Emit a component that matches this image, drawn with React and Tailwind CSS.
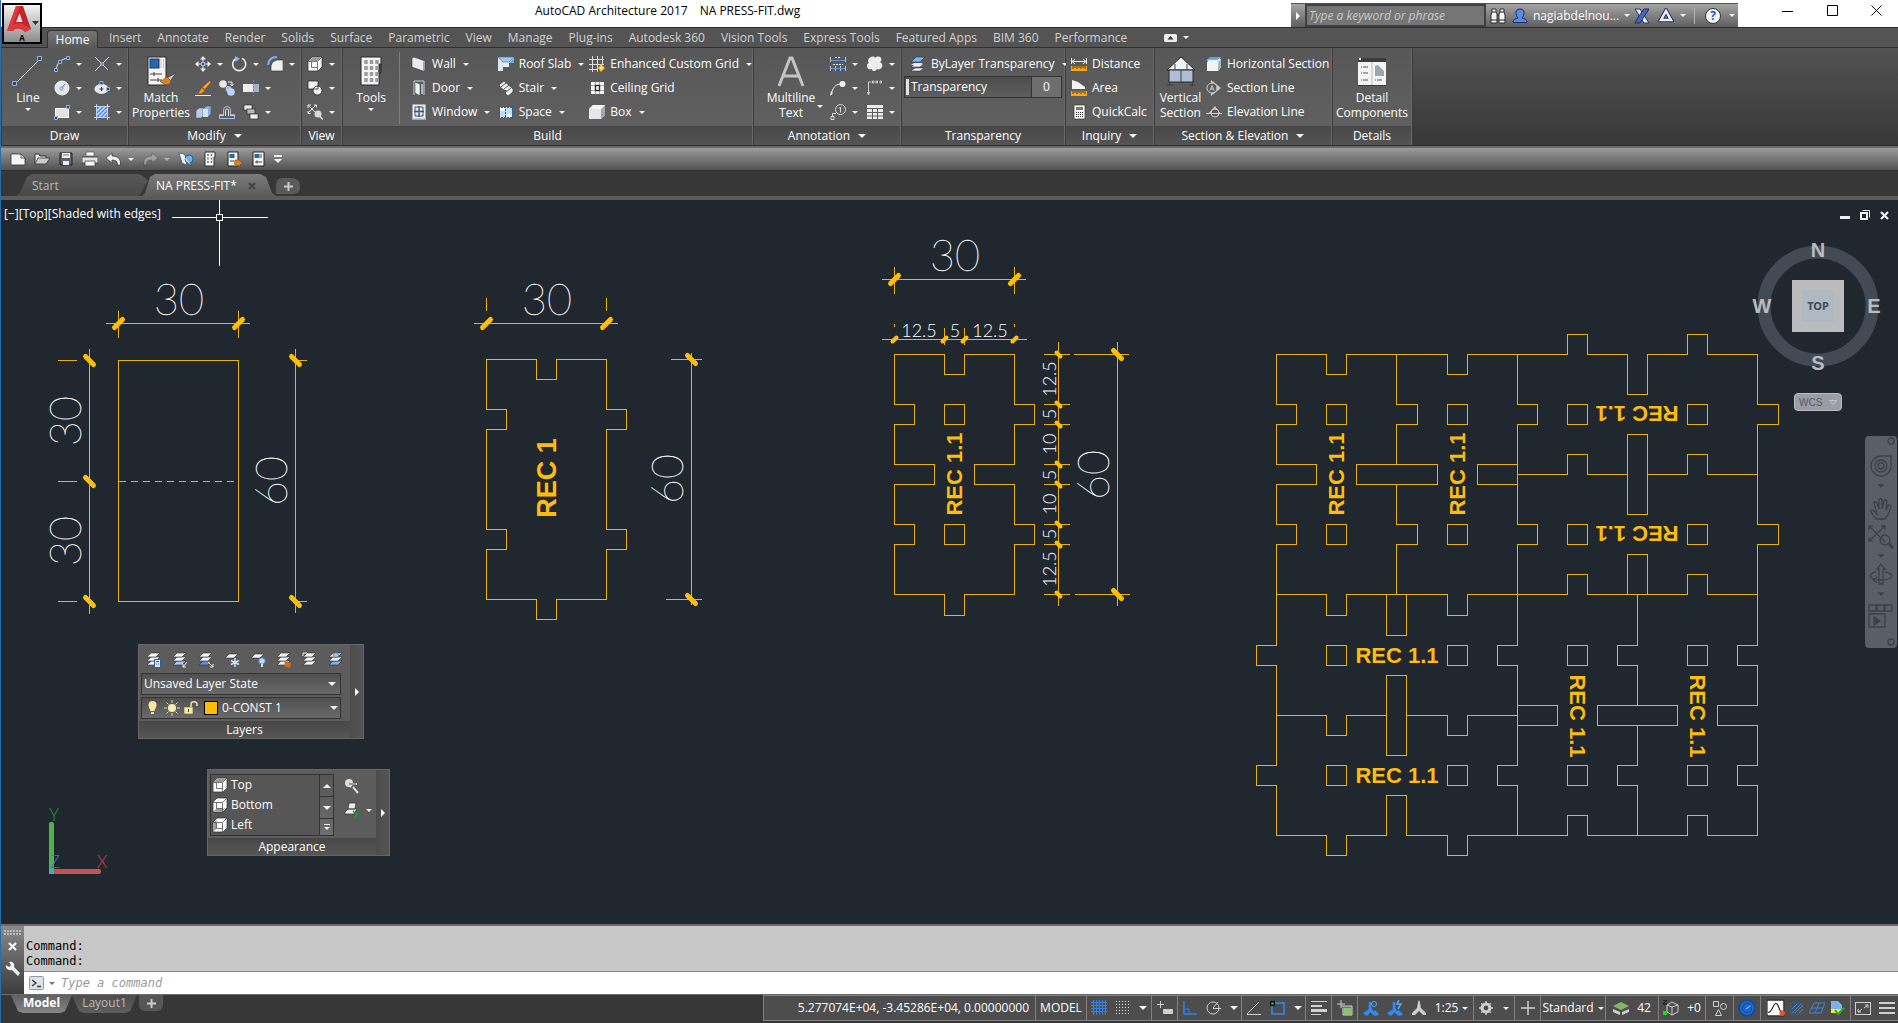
import React from 'react';

const GOLD = '#fdbe0b';

/* ---------- small helpers ---------- */

function Ic({ children, size = 16, label }) {
  return (
    <svg width={size} height={size} viewBox="0 0 16 16" className="shrink-0" fill="none" aria-label={label}>
      {children}
    </svg>
  );
}

function Caret({ big, up }) {
  const w = big ? 8 : 6;
  return (
    <svg width={w} height={w / 2} viewBox="0 0 8 4" className="shrink-0" fill="#f2f2f2">
      <path d={up ? 'M0 4h8L4 0z' : 'M0 0h8L4 4z'} />
    </svg>
  );
}

function RightArrow() {
  return (
    <svg width="4" height="8" viewBox="0 0 4 8" fill="#fff">
      <path d="M0 0v8l4-4z" />
    </svg>
  );
}

/* ---------- ribbon icons ---------- */

const B = '#8db4f0';
const D = '#2b2b2b';

const icons = {
  arc: (
    <Ic label="Arc">
      <path d="M2 14C3 7 7 3 14 2" stroke="#eee" />
      <path d="M.5 12.500h3v3h-3zM4.500 4.500h3v3h-3zM12.500.5h3v3h-3z" stroke={B} fill="#3b4658" />
    </Ic>
  ),
  trimx: (
    <Ic label="Construction line">
      <path d="M1 1l7 7M15 1L1 15M8 8l6 6" stroke="#e6e6e6" />
      <path d="M6.500 6.500h3v3h-3z" fill={B} />
    </Ic>
  ),
  circle: (
    <Ic label="Circle">
      <circle cx="8" cy="8" r="7" fill="#e3e7ea" stroke="#f6f6f6" />
      <path d="M8 8l3-4" stroke="#4a78c0" />
      <circle cx="7.500" cy="8.500" r="1.600" fill="#b8d2f5" stroke="#6f9ad8" />
    </Ic>
  ),
  ellipse: (
    <Ic label="Ellipse">
      <ellipse cx="7.500" cy="9" rx="7" ry="5" fill="#e6eaee" />
      <path d="M7.500 7v4M5.500 9h4" stroke="#333" />
      <path d="M12.500 7.500h3v3h-3zM6 1.500h3v3H6z" stroke={B} fill="#3b4658" />
    </Ic>
  ),
  rect: (
    <Ic label="Rectangle">
      <rect x="1.500" y="4.500" width="13" height="9" fill="#e3e3e3" stroke="#fafafa" />
      <path d="M.5 12.500h3v3h-3zM12.500 1.500h3v3h-3z" stroke={B} fill="#3b4658" />
    </Ic>
  ),
  hatch: (
    <Ic label="Hatch">
      <rect x="3" y="3" width="10" height="10" fill="#4f86d6" />
      <path d="M3 7l4-4M3 11l8-8M5 13l8-8M9 13l4-4" stroke="#dce9fb" strokeWidth="1.200" />
      <path d="M2.500 0v16M13.500 0v16M0 2.500h16M0 13.500h16" stroke="#bcd3f2" />
    </Ic>
  ),
  move: (
    <Ic label="Move">
      <path d="M8 0l3 3.500H5zM8 16l3-3.500H5zM0 8l3.500-3v6zM16 8l-3.500-3v6z" fill="#eee" />
      <path d="M8 3v3M8 10v3M3 8h3M10 8h3" stroke="#eee" />
      <rect x="6.500" y="6.500" width="3" height="3" stroke={B} />
    </Ic>
  ),
  rotate: (
    <Ic label="Rotate">
      <path d="M5 2.500A6.500 6.500 0 1 0 11 2.300" stroke="#ededed" strokeWidth="1.600" />
      <path d="M4 0l5 2.500L4.500 6z" fill={B} />
    </Ic>
  ),
  fillet: (
    <Ic label="Fillet">
      <path d="M4 15V11C4 7 7 4 11 4h5v11z" fill="#f0f0f0" stroke={D} strokeWidth=".6" />
      <path d="M1 9C1.500 4 4 1 10 1" stroke="#7fb0ee" strokeWidth="2" />
    </Ic>
  ),
  erase: (
    <Ic label="Erase">
      <path d="M0 15.500h16" stroke="#eee" />
      <path d="M14.500.5l1.500 2-6 7-3-2z" fill="#f2a33a" stroke="#6b3a10" strokeWidth=".6" />
      <path d="M7 8l2.500 2c-1 3-3.500 4-6.500 3.500z" fill="#ff9c1a" stroke="#c9480e" strokeWidth=".6" />
    </Ic>
  ),
  copy: (
    <Ic label="Copy">
      <circle cx="4" cy="4" r="3.800" fill="#e8e8e8" />
      <circle cx="9.500" cy="9" r="3" fill="#a9c6ee" />
      <circle cx="12" cy="12" r="3.800" fill="#bcd4f5" />
      <path d="M9 2h4v3M11.500 4l1.500 2 1.500-2" stroke="#eee" />
    </Ic>
  ),
  stretch: (
    <Ic label="Stretch">
      <rect x="0" y="4" width="10" height="8" fill="#eee" />
      <rect x="10" y="4" width="6" height="8" fill="#9fb3c9" />
      <path d="M10.500 0v16" stroke="#3d9be9" strokeDasharray="2 1" />
    </Ic>
  ),
  boxes: (
    <Ic label="Mirror">
      <path d="M1 7l3-3h5v7l-3 3H1z" fill="#b5ccea" stroke="#556" strokeWidth=".5" />
      <path d="M8 5l3-3h5v8l-3 3H8z" fill="#8db0dd" stroke="#445" strokeWidth=".5" />
      <path d="M8 5h5v8H8z" fill="#d5e3f5" />
    </Ic>
  ),
  offset: (
    <Ic label="Offset">
      <path d="M.5 14.500v-3h4V6a3.500 3.500 0 0 1 7 0v5.500h4v3z" stroke="#9fc0ee" />
      <path d="M6.500 12V6.500a1.500 1.500 0 0 1 3 0V12" stroke="#e9e9e9" />
      <path d="M0 11h5M11 11h5" stroke="#e9e9e9" />
    </Ic>
  ),
  array: (
    <Ic label="Draw order">
      <rect x="1" y="1" width="8" height="5" fill="#f0f0f0" stroke={D} strokeWidth=".7" />
      <rect x="4" y="5" width="8" height="5" fill="#b9b9b9" stroke={D} strokeWidth=".7" />
      <rect x="7" y="10" width="8" height="5" fill="#f0f0f0" stroke={D} strokeWidth=".7" />
    </Ic>
  ),
  cube: (
    <Ic label="Top view">
      <path d="M1 5l4-4h10v10l-4 4H1z" fill="#fafafa" stroke={D} strokeWidth=".7" />
      <path d="M1.500 5l4-3.500h9l-4 3.500z" fill="#9a9a9a" />
      <path d="M1 5.500h9.500V15M11 5l4-4M4.500 6v5.500h6" stroke="#555" strokeWidth=".8" />
    </Ic>
  ),
  cubeBottom: (
    <Ic label="Bottom view">
      <path d="M1 5l4-4h10v10l-4 4H1z" fill="#fafafa" stroke={D} strokeWidth=".7" />
      <path d="M1.500 14.500l3-3h9l-3 3z" fill="#9a9a9a" />
      <path d="M1 5.500h9.500V15M11 5l4-4M4.500 6v5.500h6" stroke="#555" strokeWidth=".8" />
    </Ic>
  ),
  cubeLeft: (
    <Ic label="Left view">
      <path d="M1 5l4-4h10v10l-4 4H1z" fill="#fafafa" stroke={D} strokeWidth=".7" />
      <path d="M1.500 5.500l3-3v9l-3 3z" fill="#9a9a9a" />
      <path d="M1 5.500h9.500V15M11 5l4-4M4.500 6v5.500h6" stroke="#555" strokeWidth=".8" />
    </Ic>
  ),
  overlap: (
    <Ic label="Visual style">
      <rect x="1" y="1" width="10" height="8" fill="#f2f2f2" stroke={D} strokeWidth=".8" />
      <circle cx="10.500" cy="10.500" r="4.500" fill="#f2f2f2" stroke={D} strokeWidth=".9" />
      <path d="M6 9h5V6" stroke={D} strokeWidth=".8" />
    </Ic>
  ),
  zoomExt: (
    <Ic label="Zoom extents">
      <path d="M1 1l7 7M9 1L1 9M1 4V1h3M7 1h2.500v2.500M1 7v2.500h2.500" stroke="#e8e8e8" />
      <circle cx="11" cy="10" r="3.500" fill="#d9d9d9" />
      <path d="M13 12.500l3 3" stroke="#ddd" strokeWidth="1.500" />
    </Ic>
  ),
  wall: (
    <Ic label="Wall">
      <path d="M1 2l2-1 11 4v9l-2 1L1 11z" fill="#e8ecef" stroke={D} strokeWidth=".5" />
      <path d="M12 6l2-1v9l-2 1z" fill="#9aa3ab" />
    </Ic>
  ),
  door: (
    <Ic label="Door">
      <path d="M3 15V1h10v14" stroke="#c9d2dc" />
      <path d="M4 2l5 2v12l-5-3z" fill="#eef1f4" stroke={D} strokeWidth=".5" />
      <path d="M10 4h2v10h-2z" fill="#aab8c8" />
    </Ic>
  ),
  window: (
    <Ic label="Window">
      <rect x="2" y="1" width="12" height="13" fill="#dfe9f3" stroke="#f5f5f5" />
      <path d="M8 2v11M3 7.500h10" stroke="#46566a" strokeWidth="1.400" />
      <path d="M4 3h8v9H4z" stroke="#46566a" />
      <path d="M1 15h14" stroke="#eee" />
    </Ic>
  ),
  roof: (
    <Ic label="Roof slab">
      <path d="M0 1h16v6h-5v4H0z" fill="#e9eef3" />
      <path d="M0 1h16l-5 5H5z" fill="#9cc7f2" stroke="#3a6ea5" strokeWidth=".6" />
      <path d="M0 2v13h5V7z" fill="#dfe5eb" />
      <path d="M16 2v5h-5z" fill="#6fa5dd" />
    </Ic>
  ),
  stair: (
    <Ic label="Stair">
      <path d="M1 5l5-4 9 8v3l-5 4-3-3 2-2-3-1-3-2z" fill="#eceff2" stroke={D} strokeWidth=".6" />
      <path d="M3 7l5-4M6 9l5-4M8 12l5-4" stroke="#596470" />
    </Ic>
  ),
  space: (
    <Ic label="Space">
      <rect x="2" y="3" width="12" height="11" fill="#bfdcf6" />
      <path d="M2 3h5v4H2zM9 10h5v4H9z" fill="#eef5fc" />
      <path d="M1.500 1v14M14.500 1v14M0 3.500h16M0 13.500h16M7.500 2v12" stroke="#2c5f8e" strokeDasharray="2 1" />
    </Ic>
  ),
  grid: (
    <Ic label="Enhanced custom grid">
      <path d="M3.500 0v16M8.500 0v16M13.500 0v9M0 3.500h15M0 8.500h15M0 13.500h9" stroke="#dedede" />
      <path d="M12 8l4 4-4 4-3-4z" fill="#ffb61e" />
      <path d="M12.500 9l-2 3.500h2L11.500 15l3-3.500h-2z" fill="#fff2b0" />
    </Ic>
  ),
  ceiling: (
    <Ic label="Ceiling grid">
      <rect x="2" y="2" width="13" height="12" fill="#f4f4f4" />
      <path d="M2 5.500h13M2 10.500h13M6.500 2v12M10.500 2v12" stroke="#aaa" />
      <rect x="6.500" y="5.500" width="4" height="5" fill="#fff" stroke={D} strokeWidth="1.400" />
    </Ic>
  ),
  solidBox: (
    <Ic label="Box">
      <path d="M0 5l4-4h12v10l-4 4H0z" fill="#e4e6e8" />
      <path d="M12 5l4-4v10l-4 4z" fill="#a4a8ac" />
      <path d="M0 5l4-4h12l-4 4z" fill="#f7f7f7" />
    </Ic>
  ),
  dim: (
    <Ic label="Dimension">
      <path d="M.5 1v5M15.500 1v5M.5 10v5M15.500 10v5M5.500 10v5M10.500 10v5" stroke="#a9c8f0" />
      <path d="M1 4.500h14M1 12.500h14" stroke="#5c94de" />
      <path d="M5 1.500h6M3 8.500h10" stroke="#e8e8e8" strokeDasharray="2 1" />
    </Ic>
  ),
  leader: (
    <Ic label="Multileader">
      <path d="M1 15C3 7 5 5 10 4" stroke="#e9e9e9" />
      <path d="M0 16l1-5 2 2z" fill="#e9e9e9" />
      <circle cx="12.500" cy="4" r="3" fill="#f2f2f2" />
    </Ic>
  ),
  tag: (
    <Ic label="Keynote">
      <circle cx="10.500" cy="5.500" r="5" stroke="#d9d9d9" />
      <path d="M9 4.500l1.500-1.500v5.500" stroke="#d9d9d9" />
      <path d="M6 9.500H2.500v3M1 12.500h3v3H1z" stroke="#d9d9d9" />
    </Ic>
  ),
  cloud: (
    <Ic label="Revision cloud">
      <path d="M4 1c2-1 4 0 4 1 1-2 5-2 6 0s0 3-1 4c2 1 3 3 2 5s-3 3-5 2c-1 1-1 2-3 2s-2-1-2-2c-2 1-4 0-5-2s1-4 2-4C0 5 1 2 4 1z" fill="#ededed" />
    </Ic>
  ),
  chain: (
    <Ic label="Leader note">
      <path d="M1.500 14V2h3M1.500 15l-1-3M1.500 15l1-3" stroke="#cfcfcf" />
      <path d="M5.500 1v2h1.500V1zM9 1v2h1.500V1zM13 1v2h1.500V1z" stroke="#cfcfcf" />
    </Ic>
  ),
  table: (
    <Ic label="Table">
      <rect x="0" y="1" width="16" height="14" fill="#ececec" />
      <path d="M0 4.500h16M0 8.500h16M0 12h16M5.500 4v11M10.500 4v11" stroke="#5c5c5c" />
    </Ic>
  ),
  layersBlue: (
    <Ic label="Transparency layers">
      <path d="M5 8h9l-4 3H1z M5 12h9l-4 3H1z" fill="#f1f1f1" stroke={D} strokeWidth=".5" />
      <path d="M6 1h9l-5 5H1z" fill="#7fb4f0" stroke="#1e3553" strokeWidth=".6" />
      <path d="M4 7h9l-3 2H1z" fill="#dfe8f3" />
    </Ic>
  ),
  distance: (
    <Ic label="Distance">
      <path d="M.5 2v6M15.500 2v6M1 5.500h14M4 3L1 5.500 4 8M12 3l3 2.500L12 8" stroke="#e9e9e9" />
      <rect x="0" y="10" width="16" height="5" fill="#f5a61b" />
      <path d="M2 10v3M4 10v2M6 10v3M8 10v2M10 10v3M12 10v2M14 10v3" stroke="#5b3a05" />
    </Ic>
  ),
  area: (
    <Ic label="Area">
      <path d="M1 0v9h13V7L7 2z" fill="#f5f5f5" />
      <rect x="0" y="11" width="16" height="5" fill="#f5a61b" />
      <path d="M2 11v3M4 11v2M6 11v3M8 11v2M10 11v3M12 11v2M14 11v3" stroke="#5b3a05" />
    </Ic>
  ),
  calc: (
    <Ic label="Calculator">
      <rect x="3" y="1" width="11" height="14" fill="#f3f3f3" stroke={D} strokeWidth=".6" />
      <rect x="5" y="3" width="7" height="3" fill="#777" />
      <path d="M5 8.500h7M5 10.500h7M5 12.500h7" stroke="#333" strokeDasharray="1 1" />
    </Ic>
  ),
  hsection: (
    <Ic label="Horizontal section">
      <path d="M1 6l3-3h11v8l-3 4H1z" fill="#f1f3f5" />
      <path d="M12 6l3-3v8l-3 4z" fill="#a9b4bf" />
      <path d="M1 4l3-3h11l-3 3z" fill="#5aa0e6" />
      <path d="M1 4h11l3-3" stroke="#bcdcfb" strokeDasharray="2 1" />
    </Ic>
  ),
  sline: (
    <Ic label="Section line">
      <path d="M5 0l10 8-10 8z" fill="#c9c9c9" />
      <circle cx="6" cy="8" r="5" fill="#5a5a5a" stroke="#d0d0d0" />
      <path d="M4 10.500l2-5 2 5M5 9h2" stroke="#d0d0d0" />
    </Ic>
  ),
  eline: (
    <Ic label="Elevation line">
      <path d="M3 9l6-7 5 7z" fill="#c9c9c9" />
      <circle cx="9" cy="9" r="4" fill="#5a5a5a" stroke="#d0d0d0" />
      <path d="M0 9.500h16" stroke="#d0d0d0" />
    </Ic>
  ),
};

/* ---------- ribbon building blocks ---------- */

function SplitIcon({ icon, caret = true }) {
  return (
    <button type="button" className="flex h-6 items-center gap-1.5">
      {icons[icon]}
      {caret && <Caret />}
    </button>
  );
}

function RowButton({ icon, label, caret }) {
  return (
    <button type="button" className="flex h-6 items-center gap-[5px] whitespace-nowrap">
      {icons[icon]}
      <span>{label}</span>
      {caret && (
        <span className="ml-0.5">
          <Caret />
        </span>
      )}
    </button>
  );
}

function BigButton({ children, lines, caret, side }) {
  return (
    <button type="button" className="flex h-[76px] flex-col items-center pt-1 leading-[15px]">
      <span className="flex h-8 items-start">{children}</span>
      <span className="relative mt-0.5">
        {lines.map((l) => (
          <span key={l} className="block">
            {l}
          </span>
        ))}
        {side && (
          <span className="absolute -right-2 top-2 flex h-4 items-center">
            <Caret />
          </span>
        )}
      </span>
      {caret && (
        <span className="flex h-2 items-center">
          <Caret />
        </span>
      )}
    </button>
  );
}

function Panel({ title, caret, className, children }) {
  return (
    <section className={'flex flex-col border-r border-[#3b3b3b] ' + className}>
      <div className="flex h-[78px] items-start border-r border-[#696969] bg-gradient-to-b from-[#575757] to-[#606060] pt-1">
        {children}
      </div>
      <button
        type="button"
        className="flex h-[19px] items-center justify-center gap-2 border-r border-[#696969] bg-gradient-to-b from-[#484848] to-[#545454]"
      >
        {title}
        {caret && <Caret big />}
      </button>
    </section>
  );
}

function Ribbon() {
  return (
    <div className="flex h-[98px] shrink-0 border-b border-[#2e2e2e] bg-gradient-to-b from-[#525252] to-[#383838] pl-px">
      <Panel title="Draw" className="w-[127px]">
        <div className="flex w-[52px] justify-center">
          <BigButton lines={['Line']} caret>
            <svg width="32" height="32" viewBox="0 0 32 32" fill="none">
              <path d="M4 27L27 4" stroke="#f2f2f2" />
              <path d="M.5 25.500h4v4h-4zM25.500.5h4v4h-4z" fill="#3b4658" stroke={B} />
            </svg>
          </BigButton>
        </div>
        <div className="grid grid-cols-[40px_30px]">
          <SplitIcon icon="arc" />
          <SplitIcon icon="trimx" />
          <SplitIcon icon="circle" />
          <SplitIcon icon="ellipse" />
          <SplitIcon icon="rect" />
          <SplitIcon icon="hatch" />
        </div>
      </Panel>
      <Panel title="Modify" caret className="w-[173px]">
        <div className="mr-0.5 flex w-[64px] justify-center">
          <BigButton lines={['Match', 'Properties']}>
            <svg width="32" height="32" viewBox="0 0 32 32" fill="none">
              <rect x="3" y="1" width="18" height="28" fill="#f4f4f4" stroke={D} />
              <rect x="5" y="3" width="9" height="9" fill="#2866ab" stroke="#123d6d" />
              <path d="M16 3v9M18.500 3v9" stroke="#c9c9c9" />
              <path d="M5 18h12M5 24h12M9 16v4M13 22v4" stroke="#444" />
              <path d="M31 17l-6 8-3-3z" fill="#d9dde1" stroke={D} strokeWidth=".6" />
              <path d="M22 21l4 4c-1 5-6 5-11 0 3 0 4-3 7-4z" fill="#d88422" stroke="#7a430c" strokeWidth=".6" />
            </svg>
          </BigButton>
        </div>
        <div>
          <div className="grid grid-cols-[36px_36px_32px]">
            <SplitIcon icon="move" />
            <SplitIcon icon="rotate" />
            <SplitIcon icon="fillet" />
          </div>
          <div className="grid grid-cols-[24px_24px_30px]">
            <SplitIcon icon="erase" caret={false} />
            <SplitIcon icon="copy" caret={false} />
            <SplitIcon icon="stretch" />
            <SplitIcon icon="boxes" caret={false} />
            <SplitIcon icon="offset" caret={false} />
            <SplitIcon icon="array" />
          </div>
        </div>
      </Panel>
      <Panel title="View" className="w-[41px]">
        <div className="pl-[5px]">
          <SplitIcon icon="cube" />
          <SplitIcon icon="overlap" />
          <SplitIcon icon="zoomExt" />
        </div>
      </Panel>
      <Panel title="Build" className="w-[411px]">
        <div className="flex w-[57px] justify-center">
          <BigButton lines={['Tools']} caret>
            <svg width="24" height="32" viewBox="0 0 24 32" fill="none">
              <path d="M2 1h20v9h-2v19H2z" fill="#f4f4f4" stroke={D} />
              <path d="M20 8h2v9h-2z" fill="#555" stroke={D} />
              <path d="M7 4v22M12.500 4v22M18 4v22" stroke="#9c9c9c" strokeWidth="3.500" strokeDasharray="4 2" />
            </svg>
          </BigButton>
        </div>
        <div className="mr-[11px] h-[72px] w-px bg-[#7d7d7d]" />
        <div className="w-[88px]">
          <RowButton icon="wall" label="Wall" caret />
          <RowButton icon="door" label="Door" caret />
          <RowButton icon="window" label="Window" caret />
        </div>
        <div className="w-[93px]">
          <RowButton icon="roof" label="Roof Slab" caret />
          <RowButton icon="stair" label="Stair" caret />
          <RowButton icon="space" label="Space" caret />
        </div>
        <div>
          <RowButton icon="grid" label="Enhanced Custom Grid" caret />
          <RowButton icon="ceiling" label="Ceiling Grid" />
          <RowButton icon="solidBox" label="Box" caret />
        </div>
      </Panel>
      <Panel title="Annotation" caret className="w-[148px]">
        <div className="mr-0.5 flex w-[74px] justify-center">
          <BigButton lines={['Multiline', 'Text']} side>
            <svg width="28" height="32" viewBox="0 0 28 32" fill="none">
              <path d="M2 30L13 2h2l11 28M6.500 20h15" stroke="#c4c4c4" strokeWidth="3" />
            </svg>
          </BigButton>
        </div>
        <div className="grid grid-cols-[37px_30px]">
          <SplitIcon icon="dim" />
          <SplitIcon icon="cloud" />
          <SplitIcon icon="leader" />
          <SplitIcon icon="chain" />
          <SplitIcon icon="tag" />
          <SplitIcon icon="table" />
        </div>
      </Panel>
      <Panel title="Transparency" className="w-[164px]">
        <div className="w-full px-0.5">
          <div className="pl-1.5">
            <RowButton icon="layersBlue" label="ByLayer Transparency" caret />
          </div>
          <label className="flex h-[22px] border border-[#333] bg-gradient-to-b from-[#4d4d4d] to-[#5e5e5e]">
            <span className="flex flex-1 items-center gap-0.5 pl-px">
              <span className="h-[16px] w-[3px] bg-[#e2e2e2]" />
              Transparency
            </span>
            <input
              defaultValue="0"
              aria-label="Transparency value"
              className="w-[30px] border-l border-[#333] bg-[#6e6e6e] text-center text-white outline-none"
            />
          </label>
        </div>
      </Panel>
      <Panel title="Inquiry" caret className="w-[89px]">
        <div className="pl-[5px]">
          <RowButton icon="distance" label="Distance" />
          <RowButton icon="area" label="Area" />
          <RowButton icon="calc" label="QuickCalc" />
        </div>
      </Panel>
      <Panel title="Section & Elevation" caret className="w-[178px]">
        <div className="flex w-[51px] justify-center">
          <BigButton lines={['Vertical', 'Section']}>
            <svg width="32" height="32" viewBox="0 0 32 32" fill="none">
              <path d="M2 14L16 1l14 13z" fill="#f0f3f6" stroke={D} />
              <rect x="4" y="14" width="24" height="12" fill="#aebfd3" stroke={D} />
              <path d="M16 14v12M10 8v6M22 8v6M2 29h6M24 29h6M4.500 26v3M27.500 26v3" stroke="#3c3c3c" />
            </svg>
          </BigButton>
        </div>
        <div>
          <RowButton icon="hsection" label="Horizontal Section" />
          <RowButton icon="sline" label="Section Line" />
          <RowButton icon="eline" label="Elevation Line" />
        </div>
      </Panel>
      <Panel title="Details" className="w-[80px]">
        <div className="flex w-full justify-center">
          <BigButton lines={['Detail', 'Components']}>
            <svg width="32" height="32" viewBox="0 0 32 32" fill="none">
              <rect x="2" y="2" width="28" height="28" fill="#3c3c3c" />
              <rect x="2" y="6" width="28" height="23" fill="#f4f4f4" />
              <path d="M3 2h2v2H3z" fill="#fff" />
              <path d="M16 6v23" stroke="#bbb" />
              <path d="M5 11h8M5 17h8M5 24h8M19 24h8" stroke="#555" strokeDasharray="1 1 5 1" />
              <path d="M19 10l3-1 6 6v5h-9z" fill="#9aa7b3" />
            </svg>
          </BigButton>
        </div>
      </Panel>
    </div>
  );
}

/* ---------- title bar and menu tabs ---------- */

function TitleBar() {
  return (
    <header className="relative flex h-[27px] shrink-0 items-start justify-end bg-white text-black">
      <div className="absolute left-[534px] top-px flex gap-3 whitespace-pre leading-5">
        <span>AutoCAD Architecture 2017</span>
        <span>NA PRESS-FIT.dwg</span>
      </div>
      <div className="mt-[3px] flex h-6 w-[447px] items-stretch border-t border-[#555] bg-gradient-to-b from-[#a5a5a5] to-[#5f5f5f] text-white">
        <button type="button" aria-label="Collapse search" className="flex w-[14px] items-center justify-center">
          <RightArrow />
        </button>
        <input
          placeholder="Type a keyword or phrase"
          aria-label="Search"
          className="w-[181px] border-2 border-[#404040] bg-[#757575] px-0.5 italic outline-none placeholder:text-[#c9c9c9]"
        />
        <button type="button" aria-label="Find" className="flex w-6 items-center justify-center">
          <Ic>
            <path d="M2 1h4v3l1 2v9H1V7l1-3zM10 1h4v3l1 3v8H9V6l1-2z" fill="#f5f5f5" stroke="#222" strokeWidth=".9" />
            <path d="M2 4h4M10 4h4M1 12h6M9 12h6M7 7h2" stroke="#222" />
          </Ic>
        </button>
        <button type="button" className="flex items-center gap-[5px] pl-0.5">
          <Ic>
            <path d="M8 1c3 0 4.500 2 4 5-.4 2-1.500 3-2 4 3 .5 5 2 5 4.500H1C1 12 3 10.500 6 10 5.500 9 4.400 8 4 6c-.5-3 1-5 4-5z" fill="#5b8be6" stroke="#17306b" />
          </Ic>
          nagiabdelnou...
          <Caret />
        </button>
        <button type="button" aria-label="Exchange" className="ml-auto flex items-center">
          <Ic>
            <path d="M1 1h5l9 14h-5z" fill="#e9edf8" stroke="#24366e" />
            <path d="M10 1h5L6 15H1l4-7z" fill="#4468c0" stroke="#1c2c5e" />
          </Ic>
        </button>
        <button type="button" aria-label="Connect" className="ml-2 flex items-center gap-1.5">
          <Ic>
            <path d="M8 3l5 9H3z" stroke="#22305c" strokeWidth="4.500" />
            <path d="M8 3l5 9H3z" stroke="#eef2fb" strokeWidth="2.500" />
          </Ic>
          <Caret />
        </button>
        <span className="ml-2 mt-1 h-4 w-px bg-[#b3b3b3]" />
        <button type="button" aria-label="Help" className="ml-2.5 mr-[3px] flex items-center gap-2">
          <span className="flex h-4 w-4 items-center justify-center rounded-full border border-[#333] bg-[#f1f4fa] text-[12px] font-bold leading-none text-[#2454b4]">
            ?
          </span>
          <Caret />
        </button>
      </div>
      <div className="ml-[26px] flex h-[20px] items-center text-black">
        <button type="button" aria-label="Minimize" className="flex w-[46px] justify-center">
          <svg width="11" height="11" stroke="#000"><path d="M0 6.500h11" /></svg>
        </button>
        <button type="button" aria-label="Maximize" className="flex w-[45px] justify-center">
          <svg width="11" height="11" stroke="#000" fill="none"><path d="M.5.5h10v10H.5z" /></svg>
        </button>
        <button type="button" aria-label="Close" className="flex w-[43px] justify-center">
          <svg width="11" height="11" stroke="#000"><path d="M.5.5l10 10M10.500.5l-10 10" /></svg>
        </button>
      </div>
      <button
        type="button"
        aria-label="Application menu"
        className="absolute left-px top-[3px] z-10 h-[41px] w-10 border-2 border-black bg-gradient-to-b from-[#f5f5f5] to-[#8d8d8d]"
      >
        <svg width="36" height="37" viewBox="0 0 36 37" fill="none">
          <path d="M3 26L12 1h7l8 23-6 3-2-6h-8l-2 5z" fill="#c4242b" />
          <path d="M15.500 8l-3.500 9h6.500z" fill="#e4e4e4" />
          <path d="M3 26L12 1h4L9 20c5-3 10-2 18 4l-6 3c-5-4-9-4-12-1z" fill="#dd3a3e" />
          <path d="M28 16h7l-3.500 4z" fill="#333" />
          <text x="18" y="36" textAnchor="middle" className="fill-black text-[8px] font-bold">A</text>
        </svg>
      </button>
    </header>
  );
}

const menuTabs = [
  'Insert', 'Annotate', 'Render', 'Solids', 'Surface', 'Parametric', 'View', 'Manage', 'Plug-ins',
  'Autodesk 360', 'Vision Tools', 'Express Tools', 'Featured Apps', 'BIM 360', 'Performance',
];

function MenuTabs() {
  return (
    <nav className="flex h-[21px] shrink-0 items-stretch border-y border-[#2f2f2f] bg-[#545454] pl-[46px] text-[#d2d2d2]">
      <button type="button" className="-mb-px mt-[2px] w-[51px] rounded-t-sm border border-b-0 border-[#333] bg-gradient-to-b from-[#767676] to-[#595959] text-white">
        Home
      </button>
      <div className="ml-[3px] flex">
        {menuTabs.map((t) => (
          <button key={t} type="button" className="whitespace-nowrap px-2">
            {t}
          </button>
        ))}
      </div>
      <button type="button" aria-label="Ribbon display" className="ml-[29px] flex items-center gap-1.5">
        <svg width="13" height="8" viewBox="0 0 13 8"><rect width="13" height="8" rx="1.500" fill="#ececec" /><path d="M3.500 5.500h6l-3-3.500z" fill="#333" /></svg>
        <Caret />
      </button>
    </nav>
  );
}

/* ---------- quick access toolbar and file tabs ---------- */

function QuickAccess() {
  const b = 'flex h-5 w-6 items-center justify-center';
  return (
    <div className="flex h-[25px] shrink-0 items-center border-b border-[#2f2f2f] border-t-2 border-t-[#6a6a6a] bg-gradient-to-b from-[#9c9c9c] to-[#525252] pl-[5px]">
      <button type="button" className={b}><Ic label="New"><path d="M1 3h10l4 4v7H1z" fill="#f6f6f6" stroke="#333" strokeWidth=".8" /><path d="M11 3v4h4" stroke="#333" strokeWidth=".8" /></Ic></button>
      <button type="button" className={b}><Ic label="Open"><path d="M1 13V3h4l1 2h6v3" fill="#eee" stroke="#333" /><path d="M1 13l3-6h12l-4 6z" fill="#c7cdd3" stroke="#333" strokeWidth=".8" /></Ic></button>
      <button type="button" className={b}><Ic label="Save"><path d="M2 2h12v12H2z" fill="#5a6470" stroke="#222" /><path d="M4 2h8v5H4zM5 10h6v4H5z" fill="#eee" /><path d="M5 4h6" stroke="#777" /></Ic></button>
      <button type="button" className={b}><Ic label="Print"><path d="M4 1h8v4H4z" fill="#f5f5f5" stroke="#444" strokeWidth=".6" /><path d="M0 6h16v6H0z" fill="#dfe3e7" stroke="#333" strokeWidth=".8" /><path d="M3 10h10v5H3z" fill="#f8f8f8" stroke="#444" strokeWidth=".8" /></Ic></button>
      <button type="button" className={b}><Ic label="Undo"><path d="M6 2v3c6 0 9 3 8.500 9h-3c0-4-2-5-5.500-5v3L0 7z" fill="#f2f2f2" stroke="#333" strokeWidth=".7" /></Ic></button>
      <span className="ml-0.5"><Caret /></span>
      <button type="button" className={b + ' ml-1 opacity-40'}><Ic label="Redo"><path d="M10 2v3C4 5 1 8 1.500 14h3c0-4 2-5 5.500-5v3l6-5z" fill="#ddd" stroke="#333" strokeWidth=".7" /></Ic></button>
      <span className="ml-0.5 opacity-50"><Caret /></span>
      <button type="button" className={b + ' ml-1'}><Ic label="Project navigator"><path d="M1 2l5 1 4 6-2 5-4-2z" fill="#e9eef3" stroke="#333" strokeWidth=".6" /><circle cx="11" cy="8" r="4" fill="#6fb4ea" stroke="#27628f" /><path d="M3 3l9 10" stroke="#fff" /></Ic></button>
      <button type="button" className={b}><Ic label="Tool palettes"><path d="M3 1h10v5h-1v9H3z" fill="#f4f4f4" stroke="#333" /><path d="M6 3v10M9.500 3v10" stroke="#777" strokeWidth="1.500" strokeDasharray="2 1.500" /></Ic></button>
      <button type="button" className={b}><Ic label="Match properties"><path d="M2 1h10v14H2z" fill="#f4f4f4" stroke="#222" /><path d="M3.500 3h5v4h-5z" fill="#2866ab" /><path d="M4 10h4" stroke="#444" /><path d="M9 9l4 0 3 3-3 3-5-2z" fill="#d88422" stroke="#7a430c" strokeWidth=".5" /></Ic></button>
      <button type="button" className={b}><Ic label="Properties"><path d="M3 1h11v14H3z" fill="#f4f4f4" stroke="#222" /><path d="M4.500 3h5v4h-5z" fill="#2866ab" /><path d="M11 3v4M5 11h7M7 9.500v3" stroke="#444" /></Ic></button>
      <button type="button" aria-label="Customize" className="ml-1 flex flex-col items-center gap-0.5">
        <span className="h-0.5 w-2 bg-[#eee]" />
        <Caret big />
      </button>
    </div>
  );
}

function FileTabs() {
  return (
    <div className="flex h-[29px] shrink-0 items-end border-b-4 border-[#5b5b5b] bg-[#373737] pl-[15px] text-[#b9b9b9]">
      <button
        type="button"
        className="h-[22px] w-[132px] bg-gradient-to-b from-[#585858] to-[#494949] pl-4 pt-px text-left [clip-path:polygon(0_100%,4px_86%,11px_14%,16px_0,calc(100%_-_10px)_0,calc(100%_-_5px)_10%,100%_30%,calc(100%_-_9px)_100%)]"
      >
        Start
      </button>
      <div className="-ml-1.5 flex h-[22px] w-[134px] items-center bg-gradient-to-b from-[#7b7b7b] to-[#5c5c5c] pl-[14px] pt-px text-white [clip-path:polygon(0_100%,3px_86%,8px_14%,13px_0,calc(100%_-_16px)_0,calc(100%_-_10px)_14%,calc(100%_-_4px)_86%,100%_100%)]">
        <button type="button" className="w-[92px] whitespace-nowrap text-left">NA PRESS-FIT*</button>
        <button type="button" aria-label="Close tab">
          <svg width="8" height="8" stroke="#444" strokeWidth="2"><path d="M1 1l6 6M7 1L1 7" /></svg>
        </button>
      </div>
      <button
        type="button"
        aria-label="New tab"
        className="mb-0.5 flex h-4 w-6 items-center justify-center rounded-br-md rounded-tl-md rounded-tr-lg bg-[#5a5a5a]"
      >
        <svg width="9" height="9" stroke="#ccc" strokeWidth="2"><path d="M4.500 0v9M0 4.500h9" /></svg>
      </button>
    </div>
  );
}

/* ---------- model space drawing ---------- */

const THIN = "fill-white stroke-white [stroke-width:0.3px] font-['Lato'] font-thin";
const REC = "fill-[#fdbe0b] font-['Liberation_Sans'] font-bold";

function Txt({ x, y, r = 0, cls, children }) {
  return (
    <text transform={`translate(${x} ${y}) rotate(${r})`} textAnchor="middle" className={cls}>
      {children}
    </text>
  );
}

/* slash marks of a horizontal or vertical dimension line */
function Marks({ pts, vertical, small }) {
  const s = small ? 2 : 4;
  return (
    <g stroke={GOLD} strokeWidth={small ? 4 : 5} strokeLinecap="round">
      {pts.map(([x, y]) => (
        <path key={x + '-' + y} d={vertical ? `M${x - s} ${y - s}L${x + s} ${y + s}` : `M${x - s} ${y + s}L${x + s} ${y - s}`} />
      ))}
    </g>
  );
}

function Drawing() {
  const big = THIN + ' text-[43px]';
  const mid = "fill-white font-['Lato'] font-light text-[18px]";
  const rec = REC + ' text-[22px]';
  const ys = [354.5, 404.5, 424.5, 464.5, 484.5, 524.5, 544.5, 594.5];
  return (
    <svg className="absolute inset-0 h-full w-full" role="img" aria-label="Press-fit piece drawing">
      <g transform="translate(-1 -200)">
        <g fill="none" stroke="#e9b21a" shapeRendering="crispEdges">
          {/* plain 30 x 60 rectangle */}
          <path d="M118.500 360.500H238.500V601.500H118.500Z" />
          <path d="M118.500 481.500H238.500" strokeDasharray="7 5" />
          <path d="M106 323.500H250M118.500 311V338M238.500 311V338" />
          <path d="M89.500 349V614M58 360.500H77M58 481.500H77M58 601.500H77" />
          <path d="M295.500 349V613M295 360.500H307M295 601.500H307" />
          {/* REC 1 */}
          <path d="M486.500 359.500H536.500V379.500H556.500V359.500H606.500V409.500H626.500V429.500H606.500V529.500H626.500V549.500H606.500V599.500H556.500V619.500H536.500V599.500H486.500V549.500H506.500V529.500H486.500V429.500H506.500V409.500H486.500Z" />
          <path d="M474 323.500H618M486.500 298V311M606.500 298V311" />
          <path d="M691.500 353V605M671 359.500H702M666 599.500H702" />
          {/* REC 1.1 */}
          <path d="M894.500 354.500H944.500V374.500H964.500V354.500H1014.500V404.500H1034.500V424.500H1014.500V464.500H974.500V484.500H1014.500V524.500H1034.500V544.500H1014.500V594.500H964.500V615.500H944.500V594.500H894.500V544.500H914.500V524.500H894.500V484.500H934.500V464.500H894.500V424.500H914.500V404.500H894.500Z" />
          <path d="M944.500 404.500h20v20h-20zM944.500 524.500h20v20h-20z" />
          <path d="M882 279.500H1026M894.500 267V294M1014.500 267V294" />
          <path d="M882 339.500H1027M894.500 324V327M1014.500 324V327M944.500 328V345M964.500 328V345" />
          <path d="M1058.500 342V606" />
          {ys.map((y) => (
            <path key={y} d={`M1044 ${y}H1070`} />
          ))}
          <path d="M1117.500 342V606M1074 354.500H1129M1075 594.500H1130" />
          {/* assembly outline */}
          <path d="M1276.500 354.500H1326.500V374.500H1346.500V354.500H1447.500V374.500H1467.500V354.500H1567.500V334.500H1587.500V354.500H1627.500V394.500H1647.500V354.500H1687.500V334.500H1707.500V354.500H1757.500V404.500H1778.500V424.500H1757.500V524.500H1778.500V544.500H1757.500V645.500H1737.500V665.500H1757.500V705.500H1717.500V725.500H1757.500V765.500H1737.500V785.500H1757.500V835.500H1707.500V815.500H1687.500V835.500H1587.500V815.500H1567.500V835.500H1467.500V855.500H1447.500V835.500H1406.500V795.500H1386.500V835.500H1346.500V855.500H1326.500V835.500H1276.500V785.500H1256.500V765.500H1276.500V665.500H1256.500V645.500H1276.500V544.500H1296.500V524.500H1276.500V484.500H1316.500V464.500H1276.500V424.500H1296.500V404.500H1276.500Z" />
          {/* joints */}
          <path d="M1396.500 354.500V404.500H1417.500V424.500H1396.500V464.500M1396.500 484.500V524.500H1417.500V544.500H1396.500V594.500" />
          <path d="M1356.500 464.500h81v20h-81zM1477.500 464.500h40v20h-40z" />
          <path d="M1517.500 354.500V404.500H1537.500V424.500H1517.500V524.500H1537.500V544.500H1517.500V645.500H1497.500V665.500H1517.500V765.500H1497.500V785.500H1517.500V835.500" />
          <path d="M1517.500 474.500H1567.500V454.500H1587.500V474.500H1627.500M1647.500 474.500H1687.500V454.500H1707.500V474.500H1757.500" />
          <path d="M1627.500 434.500h20v80h-20zM1627.500 554.500h20v40h-20z" />
          <path d="M1276.500 594.500H1326.500V615.500H1346.500V594.500H1447.500V615.500H1467.500V594.500H1567.500V574.500H1587.500V594.500H1687.500V574.500H1707.500V594.500H1757.500" />
          <path d="M1386.500 594.500h20v41h-20zM1386.500 675.500h20v80h-20z" />
          <path d="M1276.500 715.500H1326.500V735.500H1346.500V715.500H1386.500M1406.500 715.500H1447.500V735.500H1467.500V715.500H1517.500" />
          <path d="M1637.500 594.500V645.500H1617.500V665.500H1637.500V705.500M1637.500 725.500V765.500H1617.500V785.500H1637.500V835.500" />
          <path d="M1517.500 705.500h40v20h-40zM1597.500 705.500h80v20h-80z" />
          {[1326.5, 1447.5, 1567.5, 1687.5].map((x) =>
            [404.5, 524.5, 645.5, 765.5].map((y) => <rect key={x + '-' + y} x={x} y={y} width="20" height="20" />)
          )}
        </g>

        <Marks pts={[[118.5, 323.5], [238.5, 323.5], [486.5, 323.5], [606.5, 323.5], [894.5, 279.5], [1014.5, 279.5]]} />
        <Marks vertical pts={[[89.5, 360.5], [89.5, 481.5], [89.5, 601.5], [295.5, 360.5], [295.5, 601.5], [691.5, 359.5], [691.5, 599.5], [1117.5, 354.5], [1117.5, 594.5]]} />
        <Marks small pts={[[894.5, 339.5], [944.5, 339.5], [964.5, 339.5], [1014.5, 339.5]]} />
        <Marks small vertical pts={ys.map((y) => [1058.5, y])} />

        <Txt x={179} y={315} cls={big}>30</Txt>
        <Txt x={81} y={421} r={-90} cls={big}>30</Txt>
        <Txt x={81} y={541} r={-90} cls={big}>30</Txt>
        <Txt x={287} y={481} r={-90} cls={big}>60</Txt>
        <Txt x={547} y={315} cls={big}>30</Txt>
        <Txt x={683} y={479} r={-90} cls={big}>60</Txt>
        <Txt x={955} y={271} cls={big}>30</Txt>
        <Txt x={1109} y={475} r={-90} cls={big}>60</Txt>
        <Txt x={919} y={337} cls={mid}>12.5</Txt>
        <Txt x={955} y={337} cls={mid}>5</Txt>
        <Txt x={990} y={337} cls={mid}>12.5</Txt>
        <Txt x={1056} y={379} r={-90} cls={mid}>12.5</Txt>
        <Txt x={1056} y={414} r={-90} cls={mid}>5</Txt>
        <Txt x={1056} y={444} r={-90} cls={mid}>10</Txt>
        <Txt x={1056} y={475} r={-90} cls={mid}>5</Txt>
        <Txt x={1056} y={504} r={-90} cls={mid}>10</Txt>
        <Txt x={1056} y={534} r={-90} cls={mid}>5</Txt>
        <Txt x={1056} y={569} r={-90} cls={mid}>12.5</Txt>

        <Txt x={556} y={478} r={-90} cls={REC + ' text-[27px]'}>REC 1</Txt>
        <Txt x={962} y={474} r={-90} cls={rec}>REC 1.1</Txt>
        <Txt x={1344} y={474} r={-90} cls={rec}>REC 1.1</Txt>
        <Txt x={1465} y={474} r={-90} cls={rec}>REC 1.1</Txt>
        <Txt x={1637} y={406} r={180} cls={rec}>REC 1.1</Txt>
        <Txt x={1637} y={526} r={180} cls={rec}>REC 1.1</Txt>
        <Txt x={1397} y={663} cls={rec}>REC 1.1</Txt>
        <Txt x={1397} y={783} cls={rec}>REC 1.1</Txt>
        <Txt x={1570} y={716} r={90} cls={rec}>REC 1.1</Txt>
        <Txt x={1690} y={716} r={90} cls={rec}>REC 1.1</Txt>

        {/* crosshair */}
        <g stroke="#fff" fill="none" shapeRendering="crispEdges">
          <path d="M172 217.500H216M223 217.500H268M219.500 200V214M219.500 221V266" />
          <rect x="216.500" y="214.500" width="6" height="6" />
        </g>

        {/* coordinate system marker */}
        <rect x="49" y="822" width="5" height="50" rx="2" fill="#55b050" />
        <rect x="53" y="869" width="48" height="5" rx="2" fill="#c25454" />
        <rect x="49" y="869" width="5" height="5" fill="#4f9fd8" />
        <text x="54" y="821" textAnchor="middle" className="fill-[#2f9a34] font-['Lato'] font-light text-[17px]">Y</text>
        <text x="102" y="868" textAnchor="middle" className="fill-[#d8384a] font-['Lato'] font-light text-[17px]">X</text>
        <text x="55" y="868" textAnchor="middle" className="fill-[#2f6fe0] font-['Lato'] font-light text-[17px]">Z</text>
      </g>
    </svg>
  );
}

function ViewCube() {
  return (
    <div className="absolute right-[18px] top-[39px] flex w-[124px] flex-col items-center">
      <svg width="136" height="134" viewBox="0 0 136 134" aria-label="View cube" className="shrink-0">
        <circle cx="68" cy="67" r="54" fill="none" stroke="#434a53" strokeWidth="13" />
        <rect x="42" y="41" width="52" height="52" fill="#b9bbbd" />
        <rect x="52" y="51" width="32" height="32" fill="#b0b9c2" />
        <g className="fill-[#b9bbbd] font-['Liberation_Sans'] text-[20px] font-bold" textAnchor="middle">
          <text x="68" y="18">N</text>
          <text x="68" y="131">S</text>
          <text x="12" y="74">W</text>
          <text x="124" y="74">E</text>
        </g>
        <text x="68" y="71" textAnchor="middle" className="fill-[#3f4a57] font-['Noto_Sans'] text-[11px] font-bold">TOP</text>
      </svg>
      <button type="button" className="mt-5 flex h-[18px] w-12 items-center justify-between rounded border border-[#b9bbc2] bg-[#9a9da6] px-1 font-['Liberation_Sans'] text-[10px] text-[#545a66]">
        WCS
        <svg width="8" height="5" fill="none" stroke="#c4c7cf"><path d="M.5.5h7L4 4.500z" /></svg>
      </button>
    </div>
  );
}

function NavBar() {
  return (
    <div className="absolute right-px top-[236px] flex h-[212px] w-8 flex-col items-center rounded bg-[#5a5f67]">
      <svg width="32" height="212" viewBox="0 0 32 212" fill="none" stroke="#3c4149" strokeWidth="1.300" aria-label="Navigation bar">
        <circle cx="26" cy="5" r="3" />
        <path d="M16 20h10v10a10 10 0 1 1-10-10z" />
        <circle cx="16" cy="30" r="6" />
        <circle cx="16" cy="30" r="3" />
        <path d="M14 49h4l-2 2z" fill="#3c4149" />
        <path d="M11 83l-5-7c-1-2 1-3 3-1l3 3-3-11c0-2 2-2 3 0l2 6V64c0-2 3-2 3 0v9l2-8c1-2 3-1 3 0l-1 9 2-4c2-2 3-1 3 1l-3 8-3 4z" />
        <path d="M4 90l16 16M20 90L4 105M4 94v-4h4M16 90h4v4M4 101v4h4" />
        <circle cx="20" cy="104" r="5" />
        <path d="M24 108l4 4" strokeWidth="3" />
        <path d="M14 119h4l-2 2zM14 157h4l-2 2z" fill="#3c4149" />
        <path d="M14 148v-15h-2l4-5 4 5h-2v15z" />
        <path d="M20 136c10 1 9 8-4 8-12 0-14-6-5-8M12 141l-4 3 4 3" />
        <path d="M4 169h7v6H4zM12 169h7v6h-7zM20 169h7v6h-7zM4 178h16v13H4z" />
        <path d="M9 181l6 4-6 4z" fill="#3c4149" />
        <circle cx="26" cy="206" r="3" />
      </svg>
    </div>
  );
}

/* ---------- floating palettes ---------- */

function LayIcon({ blue, label, children }) {
  return (
    <button type="button" className="flex w-[26px] justify-center">
      <Ic label={label}>
        <path d="M5 9h9l-4 4H1z" fill={blue || '#f4f4f4'} stroke={D} strokeWidth=".6" />
        <path d="M5 5h9l-4 4H1z" fill="#f4f4f4" stroke={D} strokeWidth=".6" />
        <path d="M5 1h9l-4 4H1z" fill="#f4f4f4" stroke={D} strokeWidth=".6" />
        {children}
      </Ic>
    </button>
  );
}

function Grip() {
  return (
    <button type="button" aria-label="Panel options" className="flex w-[13px] items-center justify-center bg-gradient-to-r from-[#4c4c4c] to-[#555]">
      <RightArrow />
    </button>
  );
}

function LayersPalette() {
  return (
    <section className="absolute left-[137px] top-[444px] flex h-[95px] w-[226px] border border-[#666] bg-[#5c5c5c]">
      <div className="flex flex-1 flex-col">
        <div className="flex h-[28px] items-center pl-0.5 pt-0.5">
          <LayIcon label="Layer properties"><path d="M8.500 7.500h6v8h-6z" fill="#dbe9fa" stroke="#2c5f9e" /><path d="M10 9.500h3M10 12h1M12 12h1" stroke="#2c5f9e" /></LayIcon>
          <LayIcon label="Make current" blue="#a9c9f0"><path d="M15 10l-4 5M11 12v3h3" stroke="#eee" /></LayIcon>
          <LayIcon label="Match layer" blue="#5f93dd"><path d="M10 10l5 5M15 12v3h-3" stroke="#eee" /></LayIcon>
          <button type="button" className="flex w-[26px] justify-center"><Ic label="Freeze layer"><path d="M5 2h9l-4 4H1z" fill="#f4f4f4" stroke={D} strokeWidth=".6" /><path d="M11 6v9M7 8.500l8 4M15 8.500l-8 4" stroke="#cfe2fb" strokeWidth="1.500" /></Ic></button>
          <button type="button" className="flex w-[26px] justify-center"><Ic label="Layer off"><path d="M5 2h9l-4 4H1z" fill="#f4f4f4" stroke={D} strokeWidth=".6" /><circle cx="12" cy="9" r="3.300" fill="#bcd8f7" stroke="#3f78b8" /><path d="M12 12v3" stroke="#ddd" strokeWidth="2" /></Ic></button>
          <LayIcon label="Isolate layer"><path d="M9 9l6 2-1 5-6-2z" fill="#d06a1c" /></LayIcon>
          <LayIcon label="Previous layer"><path d="M1 4V1h4" stroke="#eee" /></LayIcon>
          <LayIcon label="Merge layers" blue="#7db0ee"><circle cx="8" cy="3" r="2.500" fill="#9cc4f5" stroke="#2c5f9e" strokeWidth=".6" /></LayIcon>
        </div>
        <div className="relative ml-0.5 h-[22px] w-[200px] border border-[#333] bg-gradient-to-b from-[#505050] to-[#6a6a6a]">
          <select aria-label="Layer state" className="h-full w-full appearance-none bg-transparent pl-0.5 text-white outline-none">
            <option>Unsaved Layer State</option>
          </select>
          <span className="pointer-events-none absolute right-1 top-0 flex h-full items-center"><Caret big /></span>
        </div>
        <div className="relative ml-0.5 mt-0.5 flex h-[22px] w-[200px] items-center gap-[3px] border border-[#333] bg-gradient-to-b from-[#505050] to-[#6a6a6a] pl-[3px]">
          <Ic label="On"><path d="M7.500 1a4 4 0 0 1 4 4c0 3-2 4-2 6h-4c0-2-2-3-2-6a4 4 0 0 1 4-4z" fill="#fbe7a0" /><path d="M6 12h3v2H6z" fill="#ddd" /></Ic>
          <Ic label="Thawed"><circle cx="8" cy="8" r="4" fill="#fbeeb8" /><path d="M8 0v3M8 13v3M0 8h3M13 8h3M2.500 2.500l2 2M11.500 11.500l2 2M13.500 2.500l-2 2M4.500 11.500l-2 2" stroke="#e9d9a0" /></Ic>
          <Ic label="Unlocked"><path d="M1 7h9v7H1z" fill="#fbe7a0" stroke="#6b5a1c" strokeWidth=".6" /><path d="M8 7V4c0-3 6-3 6 0v2" stroke="#eadfae" strokeWidth="1.500" /><path d="M5.500 9v3" stroke="#443" /></Ic>
          <span className="ml-0.5 h-[14px] w-[14px] border border-black bg-[#ffbf00]" />
          <select aria-label="Current layer" className="h-full flex-1 appearance-none bg-transparent pl-px text-white outline-none">
            <option>0-CONST 1</option>
          </select>
          <span className="pointer-events-none absolute right-0.5 top-0 flex h-full items-center"><Caret big /></span>
        </div>
        <div className="mt-auto h-[17px] bg-gradient-to-b from-[#474747] to-[#565656] text-center leading-[18px]">Layers</div>
      </div>
      <Grip />
    </section>
  );
}

function AppearancePalette() {
  return (
    <section className="absolute left-[206px] top-[569px] flex h-[87px] w-[183px] border border-[#666] bg-[#5c5c5c]">
      <div className="flex flex-1 flex-col">
        <div className="flex pl-0.5 pt-1">
          <div className="flex h-[62px] w-[124px] border border-[#333]">
            <div className="flex-1 bg-[#565656] pl-px">
              {[['cube', 'Top'], ['cubeBottom', 'Bottom'], ['cubeLeft', 'Left']].map(([ic, t]) => (
                <button key={t} type="button" className="flex h-5 w-full items-center gap-[3px] text-left">
                  {icons[ic]}
                  {t}
                </button>
              ))}
            </div>
            <div className="flex w-[14px] flex-col divide-y divide-[#333] border-l border-[#333] bg-gradient-to-b from-[#555] to-[#6d6d6d]">
              <button type="button" aria-label="Scroll up" className="flex flex-1 items-center justify-center"><Caret up big /></button>
              <button type="button" aria-label="Scroll down" className="flex flex-1 items-center justify-center"><Caret big /></button>
              <button type="button" aria-label="More views" className="flex h-4 flex-col items-center justify-center gap-0.5"><span className="h-px w-1.5 bg-[#eee]" /><Caret /></button>
            </div>
          </div>
          <div className="flex flex-col gap-2 pl-2.5 pt-1">
            <button type="button"><Ic label="Previous view"><circle cx="5" cy="5" r="4" fill="#dcdcdc" /><path d="M4 6h9M7 3L4 6l3 3M9 9l5 6" stroke="#dcdcdc" strokeWidth="2" /><path d="M5 6h7" stroke="#555" /></Ic></button>
            <button type="button" className="flex items-center gap-1.5"><Ic label="Camera"><path d="M5 1h7l-1 6H4zM1 10l3-3h9l-3 5H1z" fill="#ececec" stroke={D} strokeWidth=".7" /><path d="M9 9l6 6M15 10l-5 6" stroke="#2f8f3a" strokeWidth="1.500" /></Ic><Caret /></button>
          </div>
        </div>
        <div className="mt-auto h-[17px] bg-gradient-to-b from-[#474747] to-[#565656] text-center leading-[18px]">Appearance</div>
      </div>
      <Grip />
    </section>
  );
}

/* ---------- command line and status bar ---------- */

function CommandLine() {
  return (
    <div className="flex h-[70px] shrink-0 border-t-2 border-[#6b6b6b] bg-[#c8c8c8] font-['DejaVu_Sans_Mono'] text-[12px] text-black">
      <div className="flex w-[23px] flex-col items-center gap-2.5 bg-gradient-to-b from-[#8a8a8a] to-[#3c3c3c] pt-1">
        <svg width="18" height="6" fill="#b9b9b9"><path d="M0 0h2v2H0zM3 0h2v2H3zM6 0h2v2H6zM9 0h2v2H9zM12 0h2v2h-2zM15 0h2v2h-2zM0 3h2v2H0zM3 3h2v2H3zM6 3h2v2H6zM9 3h2v2H9zM12 3h2v2h-2zM15 3h2v2h-2z" /></svg>
        <button type="button" aria-label="Close command line" className="-mt-1"><svg width="9" height="9" stroke="#fff" strokeWidth="2"><path d="M1 1l7 7M8 1L1 8" /></svg></button>
        <button type="button"><Ic label="Customize"><path d="M1 4l3 2 2-2-2-3c4-1 6 2 5 5l6 6-2 3-6-6C3 10 0 7 1 4z" fill="#f2f2f2" /></Ic></button>
      </div>
      <div className="flex flex-1 flex-col">
        <div className="flex flex-1 flex-col justify-end pb-0.5 pl-0.5 leading-[15px]">
          <div>Command:</div>
          <div>Command:</div>
        </div>
        <label className="flex h-[23px] items-center border-t border-[#8a8a8a] bg-white pl-[5px]">
          <Ic label="Recent commands"><rect x=".5" y="1.500" width="14" height="13" rx="1" fill="#dde2ea" stroke="#8d97a6" /><path d="M3 5l4 3-4 3M8 11.500h4" stroke="#333c4a" strokeWidth="1.300" /></Ic>
          <svg width="6" height="3" viewBox="0 0 8 4" fill="#777" className="mx-1"><path d="M0 0h8L4 4z" /></svg>
          <input
            placeholder="Type a command"
            aria-label="Command"
            className="ml-0.5 flex-1 bg-transparent italic outline-none placeholder:text-[#9a9a9a]"
          />
        </label>
      </div>
    </div>
  );
}

function Cell({ className, children, label }) {
  return (
    <button type="button" aria-label={label} className={'flex items-center justify-center whitespace-nowrap border-r border-[#818181] ' + className}>
      {children}
    </button>
  );
}

function StatusBar() {
  return (
    <footer className="flex h-[29px] shrink-0 items-start justify-between border-t border-[#6b6b6b] bg-[#373737]">
      <div className="flex items-start pl-2.5">
        <button type="button" className="h-[18px] w-[61px] bg-gradient-to-b from-[#606060] to-[#858585] pb-0.5 font-bold leading-4 text-white [clip-path:polygon(0_0,100%_0,calc(100%_-_7px)_90%,calc(100%_-_12px)_100%,12px_100%,7px_90%)]">
          Model
        </button>
        <button type="button" className="h-[18px] w-[65px] bg-gradient-to-b from-[#4c4c4c] to-[#5e5e5e] pb-0.5 leading-4 text-[#b9b9b9] [clip-path:polygon(0_0,100%_0,calc(100%_-_7px)_90%,calc(100%_-_12px)_100%,12px_100%,7px_90%)]">
          Layout1
        </button>
        <button type="button" aria-label="New layout" className="ml-0.5 flex h-4 w-6 items-center justify-center rounded-b-md bg-[#565656]">
          <svg width="9" height="9" stroke="#ccc" strokeWidth="2"><path d="M4.500 0v9M0 4.500h9" /></svg>
        </button>
      </div>
      <div className="flex h-[26px] border-y border-l border-[#818181] bg-[#4d4d4d]">
        <Cell className="w-[272px] !justify-end pr-1.5">5.277074E+04, -3.45286E+04, 0.00000000</Cell>
        <Cell className="w-[51px]">MODEL</Cell>
        <Cell className="w-[65px] gap-2">
          <Ic label="Grid"><path d="M2.500 0v15M5.500 0v15M8.500 0v15M11.500 0v15M14.500 0v15M0 2.500h16M0 5.500h16M0 8.500h16M0 11.500h16" stroke="#2f83ea" /></Ic>
          <Ic label="Snap"><path d="M1 1.500h14M1 4.500h14M1 7.500h14M1 10.500h14M1 13.500h14" stroke="#e0e0e0" strokeDasharray="1 2" /></Ic>
          <Caret big />
        </Cell>
        <Cell className="w-[26px]"><Ic label="Dynamic input"><path d="M3.500 1v7M0 4.500h7" stroke="#d0d0d0" /><rect x="6" y="9" width="10" height="5" rx="1" fill="#d0d0d0" /></Ic></Cell>
        <Cell className="w-[64px] gap-2">
          <Ic label="Ortho"><path d="M2 1v13h13" stroke="#2f83ea" strokeWidth="1.600" /><path d="M2 9h5v5" stroke="#2f83ea" /></Ic>
          <Ic label="Polar"><circle cx="7" cy="8" r="6" stroke="#d0d0d0" /><path d="M7 8l5-6M7 8.500h8" stroke="#d0d0d0" /></Ic>
          <Caret big />
        </Cell>
        <Cell className="w-[64px] gap-2">
          <Ic label="Object snap tracking"><path d="M1 14L13 2M1 14.500h14" stroke="#d0d0d0" /></Ic>
          <Ic label="Object snap"><rect x="2" y="3" width="12" height="11" stroke="#2f83ea" strokeWidth="1.700" /><rect x="0" y="1" width="5" height="5" fill="#111" /><rect x="1.500" y="2.500" width="2" height="2" fill="#2fdc2f" /></Ic>
          <Caret big />
        </Cell>
        <Cell className="w-[26px]"><Ic label="Lineweight"><path d="M0 1.500h16" stroke="#d0d0d0" /><path d="M0 6h11" stroke="#d0d0d0" strokeWidth="2" /><path d="M0 10.500h16" stroke="#d0d0d0" strokeWidth="3" /><path d="M0 14.500h10" stroke="#d0d0d0" /></Ic></Cell>
        <Cell className="w-[26px]"><Ic label="Selection cycling"><path d="M4 0v8M0 4h8" stroke="#d0d0d0" /><path d="M4 6h11v9H6V8" fill="#777" stroke="#d0d0d0" /><rect x="7" y="8" width="7" height="7" fill="#8cc079" /></Ic></Cell>
        <Cell className="w-[116px] gap-2">
          <Ic label="Annotation visibility"><path d="M7 2v6M3 15c3-2 4-4 4-7 1 3 2 5 6 7M1 14l4-3M11 11l4 4" stroke="#2f8bf5" strokeWidth="2.600" /><circle cx="11" cy="4" r="2.500" fill="#4d4d4d" stroke="#5aa9ff" /></Ic>
          <Ic label="Auto scale"><path d="M7 2v6M3 15c3-2 4-4 4-7 1 3 2 5 6 7M1 14l4-3M11 11l4 4" stroke="#2f8bf5" strokeWidth="2.600" /><path d="M12 0l-2 4h4l-3 5" stroke="#5aa9ff" strokeWidth="1.500" /></Ic>
          <Ic label="Annotation scale"><path d="M8 0c1.500 2 1.500 7 2 8l5 5v2h-3L8 11l-4 4H1v-2l5-5c.5-1 .5-6 2-8z" fill="#cdcdcd" /></Ic>
          <span className="flex items-center gap-1">1:25 <Caret /></span>
        </Cell>
        <Cell className="w-[41px] gap-2.5">
          <Ic size={14} label="Workspace"><circle cx="8" cy="8" r="4.500" stroke="#cfcfcf" strokeWidth="3.500" /><path d="M8 0v16M0 8h16M2.500 2.500l11 11M13.500 2.500l-11 11" stroke="#cfcfcf" strokeWidth="1.500" strokeDasharray="3 10 3" /></Ic>
          <Caret />
        </Cell>
        <Cell className="w-[26px]"><Ic label="Annotation monitor"><path d="M8 1v14M1 8h14" stroke="#d0d0d0" strokeWidth="1.500" /></Ic></Cell>
        <Cell className="w-[65px] gap-1">Standard <Caret /></Cell>
        <Cell className="w-[53px] gap-2">
          <Ic label="Surface hatch"><path d="M0 6l8-4 8 4-8 4z" fill="#86b56a" /><path d="M0 9l7 3v3l-7-3zM16 9l-7 3v3l7-3z" fill="#cfcfcf" /></Ic>
          42
        </Cell>
        <Cell className="w-[47px] gap-2">
          <Ic label="Elevation"><path d="M4 5l5-3 6 3v7l-6 3-5-3zM4 5l5 2 6-2M9 7v8" stroke="#d0d0d0" /><path d="M0 0h4L0 4h4" stroke="#111" /><rect x="0" y="11" width="4" height="4" fill="#1fd81f" /></Ic>
          +0
        </Cell>
        <Cell className="w-7"><Ic label="Isolate objects"><path d="M1.500 1.500h5v5h-5zM3.500 15.500l3-6 3 6z" stroke="#d0d0d0" /><circle cx="11.500" cy="6.500" r="3" stroke="#d0d0d0" /></Ic></Cell>
        <Cell className="w-[27px]"><Ic size={18} label="Hardware acceleration"><circle cx="8" cy="8" r="7" fill="#1e66c8" stroke="#0f4c9e" strokeWidth="1.500" /><circle cx="8" cy="8" r="4" stroke="#174f9c" /><path d="M7 9l4-3" stroke="#79b3ff" /></Ic></Cell>
        <Cell className="w-[90px] gap-1">
          <Ic size={18} label="Graph"><rect x="0" y="1" width="15" height="14" fill="#fff" stroke="#222" /><path d="M1 12c4 0 4-8 7-8s2 8 6 8" stroke="#222" /><circle cx="13.500" cy="12.500" r="2.500" fill="#e0562a" /></Ic>
          <Ic label="Hatch edit"><path d="M2 3h12v11H2z" stroke="#2c66b4" strokeDasharray="2 1" /><path d="M3 9l5-5M3 13l9-9M6 13l8-8M10 13l4-4" stroke="#3f85dd" /></Ic>
          <Ic label="Plane"><path d="M5 3h11l-4 10H0z M3 8h11M10 3L6 13" stroke="#3f85dd" /></Ic>
          <Ic label="Trusted drawing"><path d="M2 1h7l4 4v4H2z" fill="#7fb1e8" /><path d="M2 9h10v4H2z" fill="#f2e532" /><path d="M6 10l3 4 6-6" stroke="#34a53a" strokeWidth="2" /></Ic>
        </Cell>
        <Cell className="w-[47px] gap-2 border-r-0">
          <Ic label="Clean screen"><rect x=".5" y="2.500" width="15" height="12" stroke="#d0d0d0" /><path d="M3 12l4-3M3 9v3h3M13 5L9 8M10 5h3v3" stroke="#d0d0d0" /></Ic>
          <Ic label="Customization"><path d="M0 3h16M0 8h16M0 13h16" stroke="#d0d0d0" strokeWidth="2" /></Ic>
        </Cell>
      </div>
    </footer>
  );
}

export default function App() {
  return (
    <div className="flex h-screen min-w-0 flex-col overflow-hidden border-l border-[#2a6da8] bg-[#373737] font-['Open_Sans',sans-serif] text-[12px] text-white">
      <TitleBar />
      <MenuTabs />
      <Ribbon />
      <QuickAccess />
      <FileTabs />
      <main className="relative flex-1 overflow-hidden bg-[#21272f]">
        <Drawing />
        <div className="absolute left-[3px] top-1 whitespace-nowrap leading-5">[−][Top][Shaded with edges]</div>
        <div className="absolute right-[9px] top-[10px] flex items-center gap-2.5">
          <button type="button" aria-label="Minimize drawing"><svg width="10" height="10"><path d="M0 6h10v3H0z" fill="#eee" /></svg></button>
          <button type="button" aria-label="Restore drawing"><svg width="10" height="10" fill="none" stroke="#eee"><path d="M1 3h6v6H1z" strokeWidth="2" /><path d="M2.500.5h7v7" /></svg></button>
          <button type="button" aria-label="Close drawing"><svg width="9" height="9" stroke="#eee" strokeWidth="2.200"><path d="M1 1l7 7M8 1L1 8" /></svg></button>
        </div>
        <ViewCube />
        <NavBar />
        <LayersPalette />
        <AppearancePalette />
      </main>
      <CommandLine />
      <StatusBar />
    </div>
  );
}
